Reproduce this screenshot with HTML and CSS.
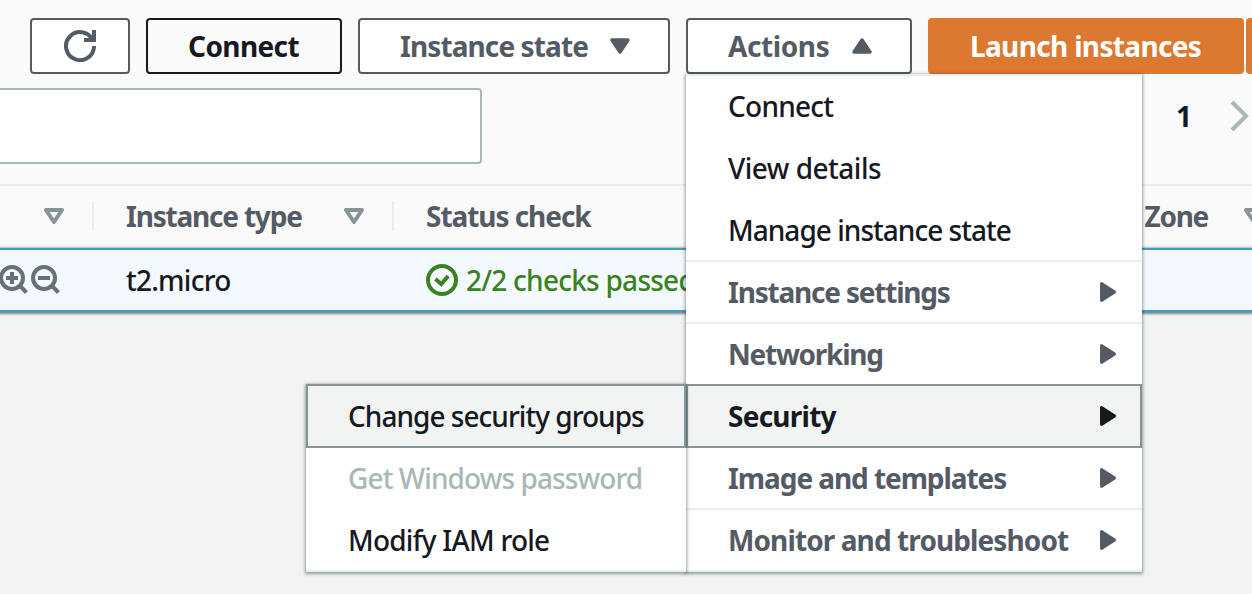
FILE: index.html
```
<!DOCTYPE html>
<html lang="en">
<head>
<meta charset="utf-8">
<title>Instances</title>
<link rel="stylesheet" href="styles.css">
</head>
<body>
<svg class="defs" width="0" height="0" aria-hidden="true">
  <symbol id="caret" viewBox="0 0 20 16"><path d="M2 2H18L10 14Z" fill="currentColor" stroke="currentColor" stroke-width="3.4" stroke-linejoin="round"/></symbol>
  <symbol id="filter" viewBox="0 0 20 16"><path d="M2 2H18L10 14Z" fill="none" stroke="currentColor" stroke-width="4" stroke-linejoin="round"/></symbol>
  <symbol id="right" viewBox="0 0 16 20"><path d="M1.7 1.8V18.2L14.2 10Z" fill="currentColor" stroke="currentColor" stroke-width="3.4" stroke-linejoin="round"/></symbol>
</svg>
<main class="screen">
  <section class="panel">
    <div class="toolbar">
      <button class="btn refresh" aria-label="Refresh"><svg width="32" height="32" viewBox="0 0 16 16" fill="none" stroke="currentColor" stroke-width="2"><path d="M10 5h5V0"/><path d="M15 8a7 7 0 1 1-.7-3"/></svg></button>
      <button class="btn connect"><span class="t-connect-b">Connect</span></button>
      <button class="btn state"><span class="t-state">Instance state</span><svg class="caret"><use href="#caret"/></svg></button>
      <div class="dropdown">
        <button class="btn actions"><span class="t-actions">Actions</span><svg class="caret up"><use href="#caret"/></svg></button>
        <div class="menu">
          <div class="item"><span class="t-connect">Connect</span></div>
          <div class="item"><span class="t-view">View details</span></div>
          <div class="item line"><span class="t-manage">Manage instance state</span></div>
          <div class="item group line"><span class="t-settings">Instance settings</span><svg class="right"><use href="#right"/></svg></div>
          <div class="item group"><span class="t-net">Networking</span><svg class="right"><use href="#right"/></svg></div>
          <div class="item group selected"><span class="t-security">Security</span><svg class="right"><use href="#right"/></svg></div>
          <div class="item group line"><span class="t-image">Image and templates</span><svg class="right"><use href="#right"/></svg></div>
          <div class="item group line"><span class="t-monitor">Monitor and troubleshoot</span><svg class="right"><use href="#right"/></svg></div>
          <div class="submenu">
            <div class="item selected"><span class="t-change">Change security groups</span></div>
            <div class="item disabled"><span class="t-get">Get Windows password</span></div>
            <div class="item line"><span class="t-modify">Modify IAM role</span></div>
          </div>
        </div>
      </div>
      <div class="split"><button class="btn launch"><span class="t-launch">Launch instances</span></button><button class="btn launch-more" aria-label="More"></button></div>
    </div>
    <div class="searchbar">
      <div class="search"></div>
      <div class="pager"><span>1</span><svg width="20" height="32" viewBox="0 0 20 32" fill="none" stroke="#aab7b8" stroke-width="4"><path d="M3 2L17 16L3 30"/></svg></div>
    </div>
    <div class="row head">
      <div class="cell first"><svg class="filter"><use href="#filter"/></svg></div>
      <div class="cell type"><span class="t-type">Instance type</span><svg class="filter"><use href="#filter"/></svg></div>
      <div class="cell"><span class="t-status">Status check</span></div>
      <div class="cell zone"><span class="t-zone">Zone</span><svg class="filter"><use href="#filter"/></svg></div>
    </div>
    <div class="row data">
      <div class="cell zooms">
        <svg width="30" height="32" viewBox="0 0 30 32" fill="none" stroke="currentColor" stroke-width="4"><circle cx="13" cy="14" r="11"/><path d="M20.5 21.5L27.5 28.5M7 14H19M13 8V20"/></svg>
        <svg width="30" height="32" viewBox="0 0 30 32" fill="none" stroke="currentColor" stroke-width="4"><circle cx="13" cy="14" r="11"/><path d="M20.5 21.5L27.5 28.5M7 14H19"/></svg>
      </div>
      <div class="cell"><span class="t-micro">t2.micro</span></div>
      <div class="cell ok"><svg width="32" height="32" viewBox="0 0 16 16" fill="none" stroke="currentColor" stroke-width="2"><circle cx="8" cy="8" r="7"/><path d="M4.7 7.5L7.6 10L11.1 6.1"/></svg><span class="t-checks">2/2 checks passed</span></div>
      <div class="cell"></div>
    </div>
  </section>
</main>
</body>
</html>
```
FILE: styles.css
```
* { box-sizing: border-box; }
body { margin: 0; background: #f2f3f3; color: #16191f; font: 500 28px/40px "Noto Sans", "Open Sans", sans-serif; }
.defs { position: absolute; }
.screen { width: 1252px; height: 594px; overflow: hidden; }
.panel { background: #fafafa; }
.toolbar { display: flex; gap: 16px; padding: 18px 0 0 30px; }
.btn { display: flex; align-items: center; flex: none; height: 56px; margin: 0; padding: 0 0 0 40px; border: 2px solid #545b64; border-radius: 4px; background: #fff; color: #545b64; font: inherit; font-weight: 700; }
span { white-space: nowrap; }
.refresh { width: 100px; padding: 0; justify-content: center; }
.connect { width: 196px; background: #fafafa; color: #16191f; border-color: #16191f; }
.state { width: 312px; }
.actions { width: 226px; }
.state, .actions { justify-content: space-between; padding-right: 38px; }
.split { display: flex; gap: 2px; }
.launch, .launch-more { background: #dd7831; border-color: #dd7831; color: #fff; }
.launch { width: 316px; }
.launch-more { width: 60px; }
.caret, .filter { width: 20px; height: 16px; flex: none; }
.up { transform: rotate(180deg); }
.right { width: 16px; height: 20px; }

.dropdown { position: relative; }
.menu { position: absolute; z-index: 2; top: 56px; left: 0; width: 456px; border-top: 2px solid #eaeded; background: #fff; box-shadow: 0 1px 3px 1px rgba(0, 28, 36, .4); }
.item { display: flex; align-items: center; justify-content: space-between; height: 62px; padding: 0 26px 0 42px; border-bottom: 2px solid #fff; }
.item span { padding-bottom: 1px; }
.line { border-bottom-color: #eaeded; }
.group { color: #545b64; font-weight: 700; }
.selected { height: 64px; margin-top: -2px; padding: 0 24px 0 40px; border: 2px solid #879596; background: #f2f3f3; color: #16191f; }
.submenu { position: absolute; right: 456px; bottom: 0; width: 380px; background: #fff; box-shadow: 0 1px 3px 1px rgba(0, 28, 36, .4); }
.submenu .selected { margin-top: 0; }
.disabled { color: #aab7b8; }

.searchbar { display: flex; justify-content: space-between; height: 110px; padding: 14px 3px 0 0; }
.search { width: 486px; height: 76px; margin-left: -4px; border: 2px solid #aab7b8; border-radius: 4px; background: #fff; }
.pager { display: flex; align-items: center; gap: 37px; height: 56px; font-weight: 700; }

.row { display: grid; grid-template-columns: 94px 300px 360px 498px; }
.cell { display: flex; align-items: center; padding-left: 32px; }
.head { height: 64px; border-top: 2px solid #eaeded; border-bottom: 2px solid #eaeded; color: #545b64; font-weight: 700; }
.head .cell { height: 30px; margin-top: 15px; }
.first, .type { border-right: 2px solid #eaeded; }
.head .first { justify-content: flex-end; padding: 0 28px 0 0; }
.type { justify-content: space-between; padding-right: 28px; }
.filter { color: #879596; }
.head .zone { justify-content: flex-end; gap: 36px; padding: 0; margin-right: -12px; }
.data { height: 64px; border-top: 2px solid #409dc5; border-bottom: 2px solid #409dc5; background: #f3f9fe; box-shadow: 0 1px 2px 1px rgba(0, 28, 36, .5); }
.data span { padding-bottom: 1px; }
.zooms { gap: 2px; padding-left: 0; margin-left: -1px; color: #687078; }
.ok { gap: 8px; color: #3a8220; }

/* Per-label tracking */
.t-connect-b { letter-spacing: -.6px; }
.t-state { letter-spacing: -.9px; }
.t-actions { letter-spacing: -.4px; }
.t-launch { letter-spacing: -.66px; }
.t-connect { letter-spacing: -.75px; }
.t-view { letter-spacing: -.5px; }
.t-manage { letter-spacing: -.97px; }
.t-settings { letter-spacing: -1.2px; }
.t-net { letter-spacing: -1.25px; }
.t-security { letter-spacing: -.75px; }
.t-image { letter-spacing: -1.07px; }
.t-monitor { letter-spacing: -.9px; }
.t-change { letter-spacing: -.97px; }
.t-get { letter-spacing: -.9px; }
.t-modify { letter-spacing: -.78px; }
.t-type { letter-spacing: -1.2px; }
.t-status { letter-spacing: -1.05px; }
.t-micro { letter-spacing: -.75px; }
.t-checks { letter-spacing: -.75px; }
.t-zone { letter-spacing: -1.3px; }
```
